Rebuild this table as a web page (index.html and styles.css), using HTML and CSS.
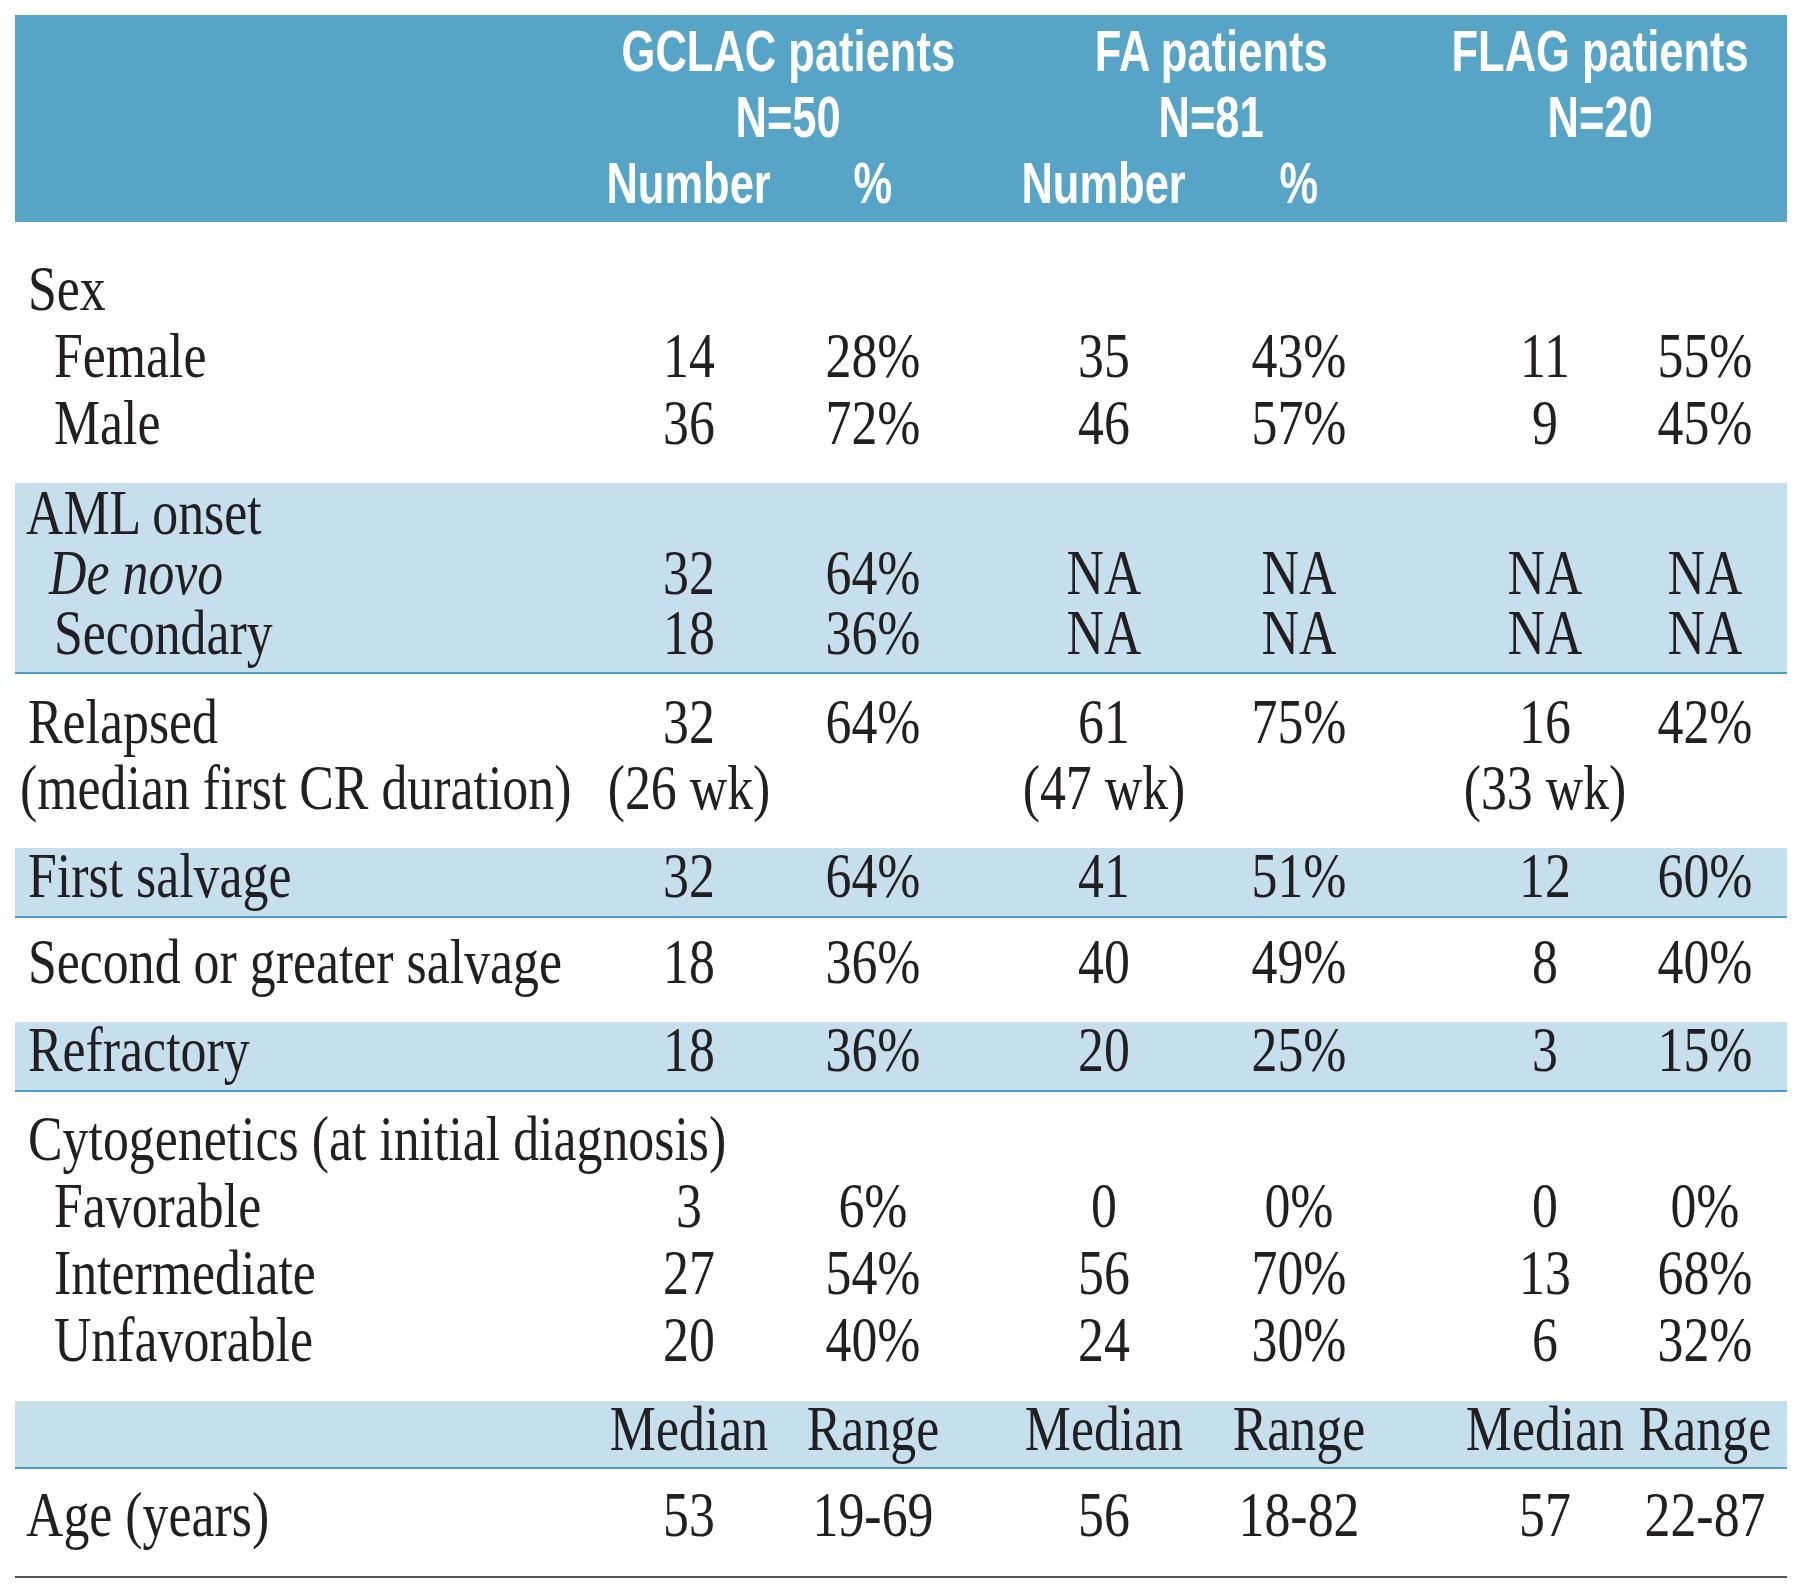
FILE: index.html
```html
<!DOCTYPE html>
<html lang="en">
<head>
<meta charset="utf-8">
<title>Patient characteristics</title>
<link rel="stylesheet" href="styles.css">
</head>
<body>
<div class="table">
  <div class="hdr">
    <div class="line">
      <div></div>
      <div class="g g1"><span>GCLAC patients</span></div>
      <div class="g g2"><span>FA patients</span></div>
      <div class="g g3"><span>FLAG patients</span></div>
    </div>
    <div class="line">
      <div></div>
      <div class="g g1"><span>N=50</span></div>
      <div class="g g2"><span>N=81</span></div>
      <div class="g g3"><span>N=20</span></div>
    </div>
    <div class="line">
      <div></div>
      <div><span>Number</span></div>
      <div><span>%</span></div>
      <div><span>Number</span></div>
      <div><span>%</span></div>
    </div>
  </div>

  <div class="grp sex">
    <div class="line"><div>Sex</div></div>
    <div class="line"><div class="sub">Female</div><div>14</div><div>28%</div><div>35</div><div>43%</div><div>11</div><div>55%</div></div>
    <div class="line"><div class="sub">Male</div><div>36</div><div>72%</div><div>46</div><div>57%</div><div>9</div><div>45%</div></div>
  </div>

  <div class="grp band aml">
    <div class="line"><div class="out">AML onset</div></div>
    <div class="line"><div class="sub"><em>De novo</em></div><div>32</div><div>64%</div><div>NA</div><div>NA</div><div>NA</div><div>NA</div></div>
    <div class="line"><div class="sub">Secondary</div><div>18</div><div>36%</div><div>NA</div><div>NA</div><div>NA</div><div>NA</div></div>
  </div>

  <div class="grp rel">
    <div class="line"><div>Relapsed</div><div>32</div><div>64%</div><div>61</div><div>75%</div><div>16</div><div>42%</div></div>
    <div class="line"><div class="paren">(median first CR duration)</div><div>(26 wk)</div><div></div><div>(47 wk)</div><div></div><div>(33 wk)</div><div></div></div>
  </div>

  <div class="grp band single">
    <div class="line"><div>First salvage</div><div>32</div><div>64%</div><div>41</div><div>51%</div><div>12</div><div>60%</div></div>
  </div>

  <div class="grp second">
    <div class="line"><div>Second or greater salvage</div><div>18</div><div>36%</div><div>40</div><div>49%</div><div>8</div><div>40%</div></div>
  </div>

  <div class="grp band single">
    <div class="line"><div>Refractory</div><div>18</div><div>36%</div><div>20</div><div>25%</div><div>3</div><div>15%</div></div>
  </div>

  <div class="grp cyto">
    <div class="line"><div>Cytogenetics (at initial diagnosis)</div></div>
    <div class="line"><div class="sub">Favorable</div><div>3</div><div>6%</div><div>0</div><div>0%</div><div>0</div><div>0%</div></div>
    <div class="line"><div class="sub">Intermediate</div><div>27</div><div>54%</div><div>56</div><div>70%</div><div>13</div><div>68%</div></div>
    <div class="line"><div class="sub">Unfavorable</div><div>20</div><div>40%</div><div>24</div><div>30%</div><div>6</div><div>32%</div></div>
  </div>

  <div class="grp band medrow">
    <div class="line"><div></div><div>Median</div><div>Range</div><div>Median</div><div>Range</div><div>Median</div><div>Range</div></div>
  </div>

  <div class="grp age">
    <div class="line"><div class="out">Age (years)</div><div>53</div><div>19-69</div><div>56</div><div>18-82</div><div>57</div><div>22-87</div></div>
  </div>
</div>
</body>
</html>
```
FILE: styles.css
```css
html, body {
  margin: 0;
  padding: 0;
  background: #ffffff;
}

.table {
  width: 1772px;
  margin: 15px 0 0 15px;
  font-family: "Liberation Serif", "Times New Roman", serif;
  font-size: 64px;
  color: #231f20;
}

.line {
  display: grid;
  grid-template-columns: 581px 160px 24px 160px 71px 160px 35px 160px 86px 160px 160px;
  padding: 0 2px 0 13px;
}

.line > :nth-child(1) { grid-column: 1; }
.line > :nth-child(2) { grid-column: 2; }
.line > :nth-child(3) { grid-column: 4; }
.line > :nth-child(4) { grid-column: 6; }
.line > :nth-child(5) { grid-column: 8; }
.line > :nth-child(6) { grid-column: 10; }
.line > :nth-child(7) { grid-column: 11; }

.line > div {
  display: flex;
  justify-content: center;
  white-space: nowrap;
  min-width: 0;
}

/* Header */
.hdr {
  background: #57a5c6;
  color: #ffffff;
  font-family: "Liberation Sans", Arial, sans-serif;
  font-weight: bold;
  font-size: 58px;
  line-height: 66px;
  padding: 3px 0 6px;
}

.hdr span {
  display: inline-block;
  flex: none;
  transform: scaleX(0.75);
}

.line > .g1 { grid-column: 2 / 5; padding-left: 14px; }
.line > .g2 { grid-column: 6 / 9; padding-left: 19px; }
.line > .g3 { grid-column: 10 / 12; padding-right: 50px; }

/* Body groups */
.grp .line > div {
  transform: scaleX(0.81);
}

.grp .line > div:first-child {
  justify-content: flex-start;
  transform-origin: left center;
}

.grp .line > .sub { padding-left: 32px; }
.grp .line > .sub em { margin-left: -6px; }
.grp .line > .out { margin-left: -2px; }
.grp .line > .paren { margin-left: -8px; }

.band {
  background: #c6dfed;
  border-bottom: 2px solid #4a9ec4;
}

.sex {
  line-height: 67px;
  padding: 33px 0 27px;
}

.aml {
  line-height: 60px;
  padding: 0 0 9px;
}

.rel {
  line-height: 66px;
  padding: 15px 0 27px;
}

.single {
  line-height: 56px;
  padding: 0 0 12px;
}

.second {
  line-height: 66px;
  padding: 11px 0 27px;
}

.cyto {
  line-height: 67px;
  padding: 13px 0 28px;
}

.medrow {
  line-height: 56px;
  padding: 0 0 10px;
}

.age {
  line-height: 66px;
  padding: 13px 0 28px;
  border-bottom: 2px solid #555555;
}
```
